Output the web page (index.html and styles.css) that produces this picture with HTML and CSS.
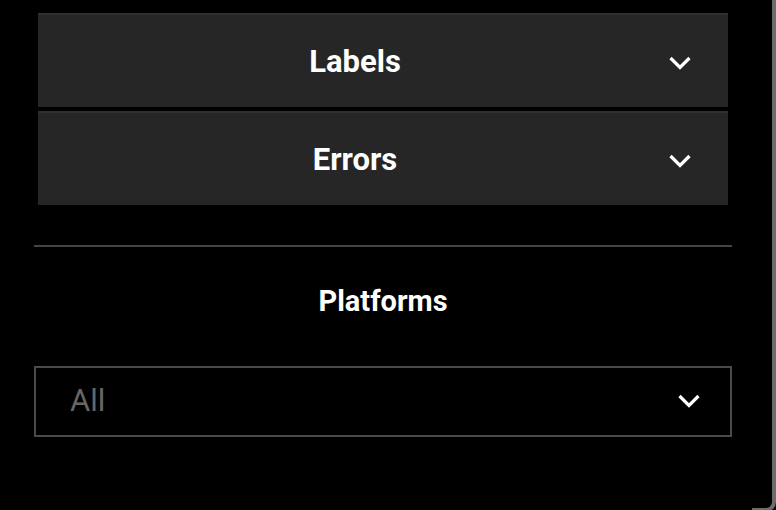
FILE: index.html
```html
<!DOCTYPE html>
<html>
<head>
<meta charset="utf-8">
<link rel="stylesheet" href="styles.css">
</head>
<body>
<div class="filters">
  <div class="accordion">
    <button class="panel">
      <span class="panel-title">Labels</span>
      <svg class="chev" width="24" height="14" viewBox="0 0 24 14"><polyline points="2.5,2 12,11.5 21.5,2" fill="none" stroke="#fff" stroke-width="3.2"/></svg>
    </button>
    <button class="panel">
      <span class="panel-title">Errors</span>
      <svg class="chev" width="24" height="14" viewBox="0 0 24 14"><polyline points="2.5,2 12,11.5 21.5,2" fill="none" stroke="#fff" stroke-width="3.2"/></svg>
    </button>
  </div>
  <hr class="divider">
  <h2 class="section-title">Platforms</h2>
  <div class="select">
    <span class="select-value">All</span>
    <svg class="chev" width="24" height="14" viewBox="0 0 24 14"><polyline points="2.5,2 12,11.5 21.5,2" fill="none" stroke="#fff" stroke-width="3.2"/></svg>
  </div>
</div>
<div class="frame-edge"></div>
</body>
</html>
```
FILE: styles.css
```css
html, body {
  margin: 0;
  padding: 0;
  background: #000;
  height: 100%;
  overflow: hidden;
}
body {
  font-family: Roboto, "Liberation Sans", sans-serif;
  color: #fff;
}
.filters {
  margin-left: 34px;
  width: 698px;
  padding-top: 13px;
}
.accordion {
  display: flex;
  flex-direction: column;
  gap: 4px;
  margin: 0 4px;
}
.panel {
  display: flex;
  align-items: center;
  height: 94px;
  padding: 0 36px 0 4px;
  background: #262626;
  border: 0;
  border-top: 2px solid #303030;
  color: #fff;
  font-family: inherit;
  cursor: pointer;
}
.panel-title {
  flex: 1;
  text-align: center;
  font-size: 31px;
  font-weight: 700;
  margin-top: 0;
}
.panel .chev {
  margin-top: 3px;
}
.divider {
  margin: 40px 0 0;
  border: 0;
  height: 2px;
  background: #444;
}
.section-title {
  margin: 37px 0 0;
  text-align: center;
  font-size: 29px;
  line-height: 34px;
  font-weight: 700;
}
.select {
  margin-top: 48px;
  height: 67px;
  border: 2px solid #4a4a4a;
  display: flex;
  align-items: center;
  padding: 0 29px 0 34px;
}
.select-value {
  flex: 1;
  font-size: 31px;
  color: #666;
  margin-top: -2px;
}
.select .chev {
  margin-top: -2px;
}
.frame-edge {
  position: fixed;
  top: -20px;
  right: 0;
  bottom: -2px;
  width: 20px;
  border-right: 4px solid #6b6b6b;
  border-bottom: 4px solid #6b6b6b;
  border-bottom-right-radius: 10px;
}
```
